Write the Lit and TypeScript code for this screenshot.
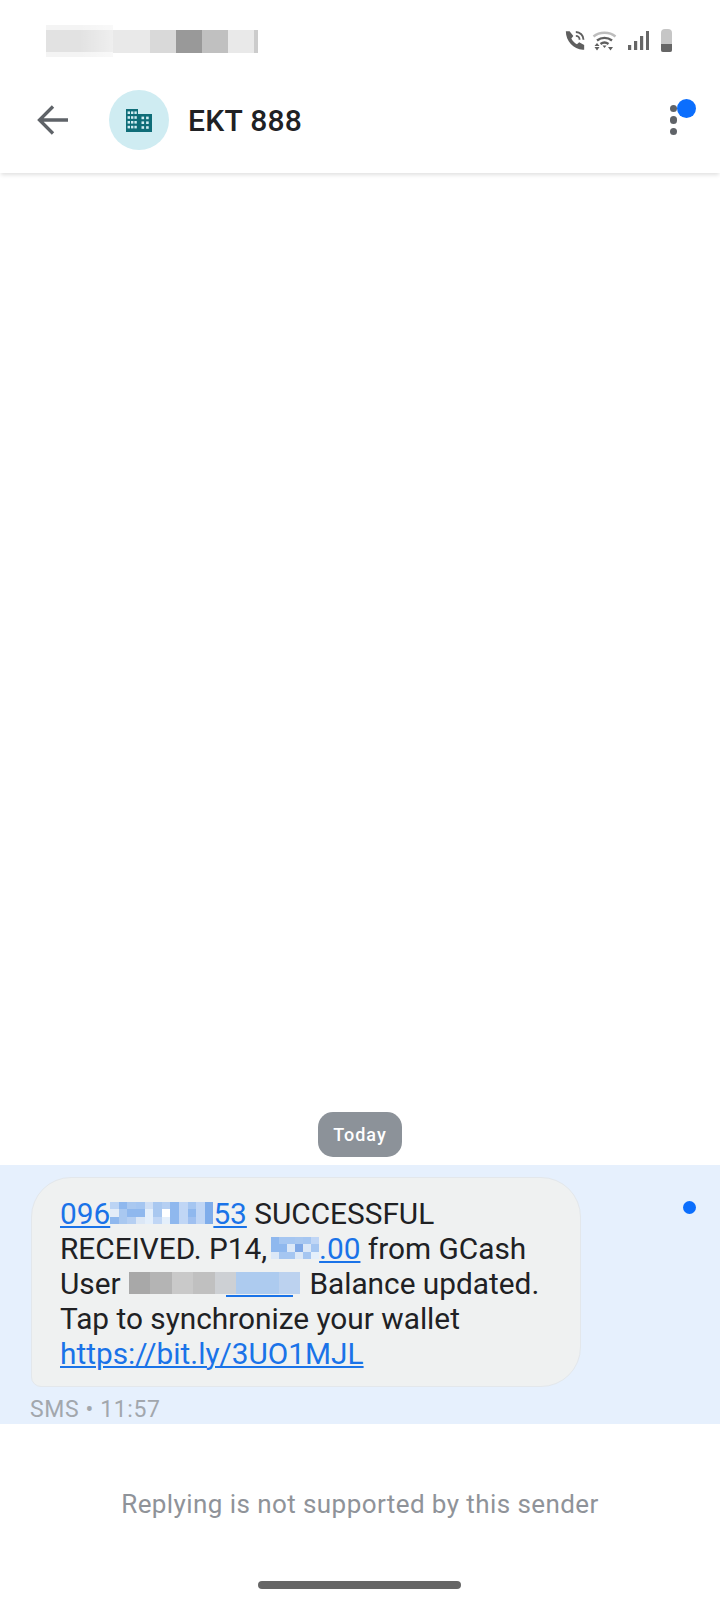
import {LitElement, html, css, svg} from 'lit';
import {customElement} from 'lit/decorators.js';

const statusCells: [number, string][] = [
  [11, '#e9e9e9'],
  [26, '#e9e9e9'],
  [26, '#d9d9d9'],
  [26, '#999999'],
  [26, '#c0c0c0'],
  [26, '#e9e9e9'],
  [4, '#cccccc'],
];

// pixelated redactions inside the message, one array per row
const phoneCells = [
  ['#bcd4f4', '#8fb8ee', '#a9c8f0', '#a5c6f1', '#cfdff5', '#a9c8f0', '#b5cff2', '#8fb8ee', '#c0d6f5', '#a5c6f1', '#c0d6f5', '#7fadeb'],
  ['#e3ecf8', '#a9c8f0', '#8fb8ee', '#8fb8ee', '#e4effb', '#a9c8f0', '#ffffff', '#8fb8ee', '#c0d6f5', '#8fb8ee', '#c0d6f5', '#7fadeb'],
  ['#8fb8ee', '#a9c8f0', '#b5cff2', '#dbe7f6', '#e4effb', '#c0d6f5', '#e4effb', '#8fb8ee', '#c0d6f5', '#9fc0f0', '#c0d6f5', '#7fadeb'],
];
const amountCells = [
  ['#8fb8ee', '#a5c6f1', '#a5c6f1', '#a9c8f0', '#a5c6f1', '#c0d6f5'],
  ['#8fb8ee', '#8fb8ee', '#dce8f7', '#7fa8e6', '#dce8f7', '#a5c6f1'],
  ['#dce8f7', '#a5c6f1', '#a5c6f1', '#dce8f7', '#a5c6f1', '#e4effb'],
];
const userCells = ['#a8a8a8', '#b4b4b4', '#c9c9c9', '#c0c0c0', '#cdd0d4', '#adcbef', '#adcbef', '#bcd2ef'];

@customElement('app-root')
export class AppRoot extends LitElement {
  private mosaic(rows: string[][], cell: number, rowH: number) {
    return html`<span class="mosaic">
      ${rows.map(
        (row) => html`<span class="mosaic-row">
          ${row.map((c) => html`<i style="width:${cell}px;height:${rowH}px;background:${c}"></i>`)}
        </span>`
      )}
    </span>`;
  }

  private building() {
    const dots = [];
    for (let r = 0; r < 4; r++) {
      for (let c = 0; c < 3; c++) {
        dots.push(svg`<rect x=${1.6 + c * 3.4} y=${2.4 + r * 4.8} width="2.4" height="2.6" fill="#cfecf2"/>`);
      }
    }
    for (let r = 0; r < 3; r++) {
      for (let c = 0; c < 2; c++) {
        dots.push(svg`<rect x=${15.5 + c * 4.6} y=${7.6 + r * 4.8} width="2.6" height="2.6" fill="#cfecf2"/>`);
      }
    }
    return html`<svg width="26" height="23" viewBox="0 0 26 23">
      <path d="M0 0h12v5h14v18H0z" fill="#0f6d78"/>
      ${dots}
    </svg>`;
  }

  override render() {
    return html`
      <div class="status">
        <div class="redacted">
          <div class="smear"></div>
          ${statusCells.map(([w, c]) => html`<i style="width:${w}px;background:${c}"></i>`)}
        </div>
        <div class="status-icons">
          <svg width="20" height="21" viewBox="0 0 24 24">
            <path d="M5.500 1 10 6.500 7.600 9.600c1.300 2.900 3.900 5.500 6.800 6.800l2.600-2.200 6 3.300V23C11 24 1 13 1 1z" fill="#5f5f5f"/>
            <path d="M13 1.800a9.200 9.200 0 0 1 9.200 9.200M13 6.500a4.500 4.500 0 0 1 4.500 4.500" fill="none" stroke="#5f5f5f" stroke-width="2.200"/>
          </svg>
          <svg class="wifi" width="25" height="21" viewBox="0 0 24 21">
            <path d="M1 6.500C7 1.500 17 1.500 23 6.500" fill="none" stroke="#bdbdbd" stroke-width="2.400"/>
            <path d="M4.500 10.500c4.500-3.500 10.500-3.500 15 0M8 14c2.500-1.800 5.500-1.800 8 0" fill="none" stroke="#5f5f5f" stroke-width="2.400"/>
            <path d="M2 16h5l-2.500-3zM2 17h5l-2.500 3.500zM15.500 17h5L18 20.500z" fill="#5f5f5f"/>
            <path d="M10 15.500h4l-2 2.500z" fill="#5f5f5f"/>
          </svg>
          <svg class="signal" width="21" height="19" viewBox="0 0 21 19">
            <path d="M0 14h3.200v5H0zM6 10h3.200v9H6zM12 5h3.200v14H12zM18 0h3.200v19H18z" fill="#666"/>
          </svg>
          <div class="battery"><div class="battery-level"></div></div>
        </div>
      </div>

      <header class="bar">
        <svg class="back" width="34" height="32" viewBox="0 0 34 32">
          <path d="M32 16H4M17 2.500 3.500 16 17 29.500" fill="none" stroke="#5f6368" stroke-width="3.300"/>
        </svg>
        <div class="avatar">${this.building()}</div>
        <div class="title">EKT 888</div>
        <div class="menu">
          <i></i><i></i><i></i>
          <span class="badge"></span>
        </div>
      </header>

      <main class="thread">
        <div class="chip">Today</div>
        <section class="unread">
          <div class="bubble">
            <a>096${this.mosaic(phoneCells, 8.600, 7.500)}53</a> SUCCESSFUL<br />
            RECEIVED. P14,<a class="amount">${this.mosaic(amountCells, 8, 7.500)}.00</a> from GCash<br />
            User <span class="user-mosaic">
              ${userCells.map((c) => html`<i style="background:${c}"></i>`)}
              <span class="user-line"></span>
            </span> Balance updated.<br />
            Tap to synchronize your wallet<br />
            <a>https://bit.ly/3UO1MJL</a>
          </div>
          <span class="dot"></span>
          <div class="meta">SMS • 11:57</div>
        </section>
      </main>

      <footer class="notice">Replying is not supported by this sender</footer>
      <div class="home"></div>
    `;
  }

  static override styles = css`
    :host {
      display: flex;
      flex-direction: column;
      width: 720px;
      height: 1608px;
      background: #fff;
      font-family: Roboto, 'Noto Sans', sans-serif;
      overflow: hidden;
    }

    i {
      display: block;
    }

    .status {
      height: 80px;
      flex: none;
      display: flex;
      align-items: center;
      justify-content: space-between;
      padding: 0 48px 0 46px;
      box-sizing: border-box;
    }

    .redacted {
      display: flex;
      height: 23px;
      margin-top: 3px;
    }

    .smear {
      width: 67px;
      height: 32px;
      margin-top: -5px;
      background:
        linear-gradient(90deg, rgba(255, 255, 255, 0) 50%, rgba(255, 255, 255, 0.45)),
        linear-gradient(#f4f4f4 0 5px, #e2e2e2 5px 27px, #f4f4f4 27px);
    }

    .status-icons {
      display: flex;
      align-items: center;
    }

    .wifi {
      margin-left: 7px;
    }

    .signal {
      margin-left: 11px;
    }

    .battery {
      margin-left: 12px;
      width: 11px;
      height: 23px;
      border-radius: 4px 4px 2px 2px;
      background: #c6c6c6;
      display: flex;
      align-items: flex-end;
    }

    .battery-level {
      width: 100%;
      height: 8px;
      background: #666;
      border-radius: 0 0 2px 2px;
    }

    .bar {
      height: 93px;
      flex: none;
      box-sizing: border-box;
      display: flex;
      align-items: center;
      padding: 0 36px 13px 36px;
      box-shadow: 0 3px 4px -1px rgba(0, 0, 0, 0.12);
      position: relative;
      z-index: 1;
    }

    .back {
      flex: none;
    }

    .avatar {
      flex: none;
      width: 60px;
      height: 60px;
      margin-left: 39px;
      border-radius: 50%;
      background: #cfecf2;
      display: flex;
      align-items: center;
      justify-content: center;
    }

    .title {
      flex: 1;
      margin-left: 19px;
      font-size: 30px;
      font-weight: 500;
      letter-spacing: 0.3px;
      color: #202124;
    }

    .menu {
      position: relative;
      display: flex;
      flex-direction: column;
      gap: 4px;
      margin-right: 7px;
    }

    .menu i {
      width: 7.500px;
      height: 7.500px;
      border-radius: 50%;
      background: #5f6368;
    }

    .badge {
      position: absolute;
      left: 7px;
      top: -6px;
      width: 19px;
      height: 19px;
      border-radius: 50%;
      background: #0b6efd;
    }

    .thread {
      flex: 1;
      display: flex;
      flex-direction: column;
      justify-content: flex-end;
      align-items: center;
    }

    .chip {
      padding: 0 15px;
      height: 45px;
      display: flex;
      align-items: center;
      box-sizing: border-box;
      border-radius: 15px;
      background: #8c9299;
      color: #fff;
      font-size: 18px;
      font-weight: 500;
      letter-spacing: 1px;
      margin-bottom: 8px;
    }

    .unread {
      align-self: stretch;
      height: 259px;
      box-sizing: border-box;
      position: relative;
      background: #e6f0fd;
      padding: 12px 0 0 31px;
    }

    .bubble {
      width: 550px;
      height: 210px;
      box-sizing: border-box;
      padding: 18px 0 0 28px;
      border: 1px solid #e3e7eb;
      border-radius: 40px 40px 40px 10px;
      background: #eff1f1;
      color: #202124;
      font-size: 29.800px;
      line-height: 35px;
    }

    .bubble a {
      color: #1a73e8;
      text-decoration: underline;
      text-decoration-thickness: 2px;
      text-underline-offset: 2px;
    }

    .bubble a.amount {
      padding-left: 4px;
    }

    .mosaic {
      display: inline-block;
      overflow: hidden;
      vertical-align: 0;
      line-height: 0;
    }

    .mosaic-row {
      display: flex;
    }

    .user-mosaic {
      display: inline-flex;
      position: relative;
      vertical-align: 0;
      overflow: visible;
      width: 171px;
      height: 22px;
      line-height: 0;
      margin: 0 2px 0 1px;
    }

    .user-mosaic i {
      flex: 1;
    }

    .user-line {
      position: absolute;
      left: 97px;
      top: 23px;
      width: 67px;
      height: 2px;
      background: #1a73e8;
    }

    .dot {
      position: absolute;
      right: 24px;
      top: 36px;
      width: 13px;
      height: 13px;
      border-radius: 50%;
      background: #0b6efd;
    }

    .meta {
      margin: 9px 0 0 -1px;
      font-size: 23px;
      line-height: 28px;
      letter-spacing: 0.6px;
      color: #a2a7ad;
    }

    .notice {
      flex: none;
      height: 184px;
      box-sizing: border-box;
      padding-top: 62px;
      text-align: center;
      color: #8f9399;
      font-size: 26px;
      line-height: 36px;
      letter-spacing: 0.42px;
    }

    .home {
      position: absolute;
      left: 258px;
      top: 1581px;
      width: 203px;
      height: 8px;
      border-radius: 4px;
      background: #666;
    }
  `;
}
